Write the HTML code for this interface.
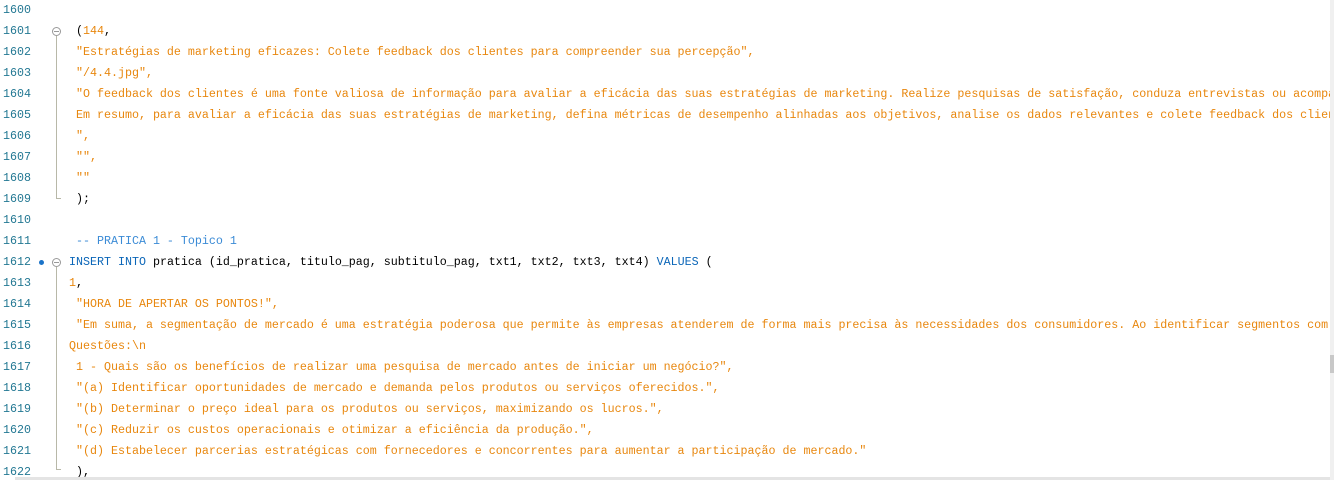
<!DOCTYPE html>
<html><head><meta charset="utf-8"><style>
body{margin:0;width:1334px;height:480px;overflow:hidden;background:#fff;position:relative;font-family:"Liberation Mono",monospace;font-size:11.67px}
.l{position:absolute;left:0;height:21px;line-height:21px;white-space:pre;width:1330px;overflow:hidden}
.n{position:absolute;left:3px;color:#237893}
.c{position:absolute;left:69px;color:#000}
.s{color:#e8870e}.k{color:#0b66b8}.m{color:#3b8bd6}
.f{position:absolute;width:9px;height:9px;border:1px solid #999;border-radius:50%;box-sizing:border-box;left:52px}
.f:after{content:"";position:absolute;left:1px;right:1px;top:3px;height:1px;background:#999}
.v{position:absolute;left:56px;width:1px;background:#b8b8a8}
.h{position:absolute;left:56px;width:5px;height:1px;background:#b8b8a8}
</style></head><body>
<div class="l" style="top:0"><span class="n">1600</span></div>
<div class="l" style="top:21px"><span class="n">1601</span><span class="c"> (<span class="s">144</span>,</span></div>
<div class="l" style="top:42px"><span class="n">1602</span><span class="c s"> "Estratégias de marketing eficazes: Colete feedback dos clientes para compreender sua percepção",</span></div>
<div class="l" style="top:63px"><span class="n">1603</span><span class="c s"> "/4.4.jpg",</span></div>
<div class="l" style="top:84px"><span class="n">1604</span><span class="c s"> "O feedback dos clientes é uma fonte valiosa de informação para avaliar a eficácia das suas estratégias de marketing. Realize pesquisas de satisfação, conduza entrevistas ou acompanhe</span></div>
<div class="l" style="top:105px"><span class="n">1605</span><span class="c s"> Em resumo, para avaliar a eficácia das suas estratégias de marketing, defina métricas de desempenho alinhadas aos objetivos, analise os dados relevantes e colete feedback dos clientes</span></div>
<div class="l" style="top:126px"><span class="n">1606</span><span class="c s"> ",</span></div>
<div class="l" style="top:147px"><span class="n">1607</span><span class="c s"> "",</span></div>
<div class="l" style="top:168px"><span class="n">1608</span><span class="c s"> ""</span></div>
<div class="l" style="top:189px"><span class="n">1609</span><span class="c"> );</span></div>
<div class="l" style="top:210px"><span class="n">1610</span></div>
<div class="l" style="top:231px"><span class="n">1611</span><span class="c m"> -- PRATICA 1 - Topico 1</span></div>
<div class="l" style="top:252px"><span class="n">1612</span><span class="c"><span class="k">INSERT INTO</span> pratica (id_pratica, titulo_pag, subtitulo_pag, txt1, txt2, txt3, txt4) <span class="k">VALUES</span> (</span></div>
<div class="l" style="top:273px"><span class="n">1613</span><span class="c"><span class="s">1</span>,</span></div>
<div class="l" style="top:294px"><span class="n">1614</span><span class="c s"> "HORA DE APERTAR OS PONTOS!",</span></div>
<div class="l" style="top:315px"><span class="n">1615</span><span class="c s"> "Em suma, a segmentação de mercado é uma estratégia poderosa que permite às empresas atenderem de forma mais precisa às necessidades dos consumidores. Ao identificar segmentos com</span></div>
<div class="l" style="top:336px"><span class="n">1616</span><span class="c s">Questões:\n</span></div>
<div class="l" style="top:357px"><span class="n">1617</span><span class="c s"> 1 - Quais são os benefícios de realizar uma pesquisa de mercado antes de iniciar um negócio?",</span></div>
<div class="l" style="top:378px"><span class="n">1618</span><span class="c s"> "(a) Identificar oportunidades de mercado e demanda pelos produtos ou serviços oferecidos.",</span></div>
<div class="l" style="top:399px"><span class="n">1619</span><span class="c s"> "(b) Determinar o preço ideal para os produtos ou serviços, maximizando os lucros.",</span></div>
<div class="l" style="top:420px"><span class="n">1620</span><span class="c s"> "(c) Reduzir os custos operacionais e otimizar a eficiência da produção.",</span></div>
<div class="l" style="top:441px"><span class="n">1621</span><span class="c s"> "(d) Estabelecer parcerias estratégicas com fornecedores e concorrentes para aumentar a participação de mercado."</span></div>
<div class="l" style="top:462px"><span class="n">1622</span><span class="c"> ),</span></div>
<div class="f" style="top:27px"></div><div class="v" style="top:36px;height:162px"></div><div class="h" style="top:198px"></div>
<div class="f" style="top:258px"></div><div class="v" style="top:267px;height:202px"></div><div class="h" style="top:469px"></div>
<div style="position:absolute;left:39px;top:260px;width:5px;height:5px;border-radius:50%;background:#1a73c8"></div>
<div style="position:absolute;left:1330px;top:0;width:4px;height:480px;background:#f0f0f0"></div>
<div style="position:absolute;left:1330px;top:355px;width:4px;height:18px;background:#c8c8c8"></div>
<div style="position:absolute;left:15px;top:477px;width:1315px;height:3px;background:#e4e4e4"></div>
</body></html>
